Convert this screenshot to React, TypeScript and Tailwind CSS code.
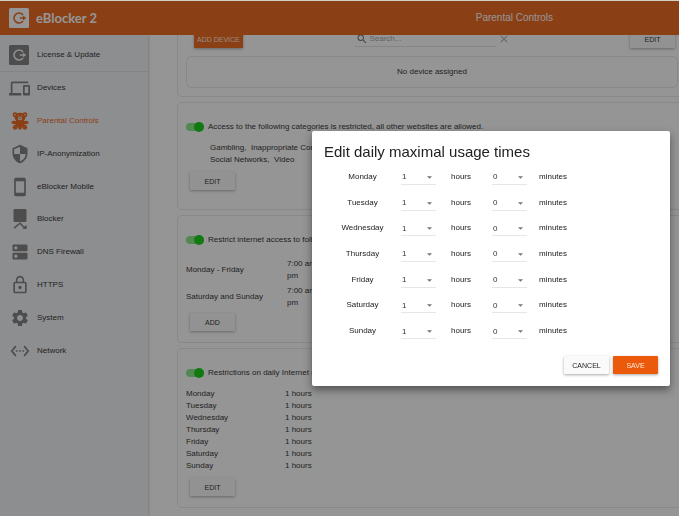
import React from 'react';
import {
  MdClose,
  MdDevices,
  MdDns,
  MdLockOutline,
  MdSearch,
  MdSecurity,
  MdSettings,
  MdSettingsEthernet,
  MdSmartphone,
} from 'react-icons/md';

const DAYS = ['Monday', 'Tuesday', 'Wednesday', 'Thursday', 'Friday', 'Saturday', 'Sunday'];

function Logo({ className, mark }: { className: string; mark: string }) {
  return (
    <svg viewBox="0 0 20 20" className={className} aria-hidden="true">
      <rect width="20" height="20" rx="1.5" fill="currentColor" />
      <path d="M14 7A5 5 0 1 0 14 13" fill="none" stroke={mark} strokeWidth="1.6" />
      <path d="M10.8 9.2H14V7.4L17.2 10L14 12.6V10.8H10.8Z" fill={mark} />
    </svg>
  );
}

function BearIcon() {
  return (
    <svg viewBox="0 0 24 24" className="size-5" fill="currentColor" aria-hidden="true">
      <circle cx="6" cy="4.4" r="2.8" />
      <circle cx="18" cy="4.4" r="2.8" />
      <ellipse cx="12" cy="7.6" rx="6.6" ry="5.4" />
      <path d="M7 11.5h10l1 7.5H6z" />
      <ellipse cx="5" cy="13.8" rx="3.4" ry="2.1" />
      <ellipse cx="19" cy="13.8" rx="3.4" ry="2.1" />
      <circle cx="6.2" cy="19.6" r="2.9" />
      <circle cx="17.8" cy="19.6" r="2.9" />
      <ellipse cx="12" cy="19.6" rx="2.3" ry="2.9" />
      <g fill="#f0f2f5">
        <circle cx="6" cy="4.4" r="0.9" />
        <circle cx="18" cy="4.4" r="0.9" />
        <circle cx="9.6" cy="5.6" r="0.6" />
        <circle cx="14.4" cy="5.6" r="0.6" />
        <circle cx="12" cy="8.8" r="2.3" />
      </g>
      <circle cx="12" cy="8.6" r="1" />
    </svg>
  );
}

function BlockerIcon() {
  return (
    <svg viewBox="0 0 20 20" className="size-5" fill="currentColor" aria-hidden="true">
      <rect x="3.5" y="0" width="13" height="13" rx="1.2" />
      <path d="M4 19.2L10 14.2L12.8 17L15 18.8" fill="none" stroke="currentColor" strokeWidth="1.5" />
      <path d="M16.6 15.8V20H12.4Z" />
    </svg>
  );
}

const NAV = [
  { label: 'Devices', icon: <MdDevices className="size-[21px]" /> },
  { label: 'Parental Controls', icon: <BearIcon />, active: true },
  { label: 'IP-Anonymization', icon: <MdSecurity className="size-5" /> },
  { label: 'eBlocker Mobile', icon: <MdSmartphone className="size-5" /> },
  { label: 'Blocker', icon: <BlockerIcon /> },
  { label: 'DNS Firewall', icon: <MdDns className="size-5" /> },
  { label: 'HTTPS', icon: <MdLockOutline className="size-5" /> },
  { label: 'System', icon: <MdSettings className="size-5" /> },
  { label: 'Network', icon: <MdSettingsEthernet className="size-5" /> },
];

function Button({ children, primary = false }: { children: React.ReactNode; primary?: boolean }) {
  return (
    <button
      type="button"
      className={
        'h-[18px] min-w-[45px] rounded-[1px] px-[3px] text-[7px] leading-none shadow-[0_1px_3px_rgba(0,0,0,0.35)] ' +
        (primary ? 'bg-[#eb5a0a] text-[#ffe9dc]' : 'bg-[#fafafa] text-[#212121]')
      }
    >
      {children}
    </button>
  );
}

function Toggle({ label }: { label: string }) {
  return (
    <label className="flex h-3 items-center gap-1 whitespace-nowrap">
      <input
        type="checkbox"
        role="switch"
        defaultChecked
        className="h-2 w-[18px] appearance-none rounded-full bg-[#80e680] before:-mt-px before:ml-2 before:block before:size-[10px] before:rounded-full before:bg-[#00cc00] before:content-['']"
      />
      {label}
    </label>
  );
}

function Card({ className = '', children }: { className?: string; children: React.ReactNode }) {
  return (
    <section className={'rounded-[5px] border border-[#e6e6e6] px-2 ' + className}>{children}</section>
  );
}

function NumberSelect({ label, max, value }: { label: string; max: number; value: number }) {
  return (
    <span className="relative block">
      <select
        aria-label={label}
        defaultValue={value}
        className="block h-4 w-full appearance-none border-b border-[#e6e6e6] bg-transparent pt-[2px] pl-px text-[8px] text-[#333]"
      >
        {Array.from({ length: max + 1 }, (_, n) => (
          <option key={n}>{n}</option>
        ))}
      </select>
      <svg viewBox="0 0 6 3" className="pointer-events-none absolute top-[7px] right-1 h-[3px] w-[5px]" aria-hidden="true">
        <path d="M0 0h6L3 3z" fill="#757575" />
      </svg>
    </span>
  );
}

function UsageDialog() {
  return (
    <div
      role="dialog"
      aria-labelledby="usage-title"
      className="w-[358px] rounded-[2px] bg-white p-3 shadow-[0_4px_9px_rgba(0,0,0,0.45)]"
    >
      <h2 id="usage-title" className="text-[15px] leading-[18px] text-[#212121]">
        Edit daily maximal usage times
      </h2>
      <div className="mt-[3px] grid h-[180px] auto-rows-fr">
        {DAYS.map((day) => (
          <div key={day} className="grid grid-cols-[77px_35px_21px_35px_auto] items-center">
            <span className="text-center">{day}</span>
            <NumberSelect label={day + ' hours'} max={23} value={1} />
            <span className="ml-[15px]">hours</span>
            <span className="ml-[35px] w-[35px]">
              <NumberSelect label={day + ' minutes'} max={59} value={0} />
            </span>
            <span className="ml-[47px]">minutes</span>
          </div>
        ))}
      </div>
      <div className="mt-3 flex justify-end gap-1">
        <Button>CANCEL</Button>
        <Button primary>SAVE</Button>
      </div>
    </div>
  );
}

export default function App() {
  return (
    <div className="flex h-screen flex-col overflow-hidden border-t border-[#d5cfc8] bg-white font-['Liberation_Sans',Arial,sans-serif] text-[8px] leading-3 text-[#212121]">
      <header className="relative z-10 flex h-[34px] shrink-0 items-center bg-[#eb5a0a] text-white">
        <div className="flex flex-1 items-center gap-[7px] pl-[9px]">
          <Logo className="size-5 text-white" mark="#eb5a0a" />
          <span className="font-[Lato,sans-serif] text-[13px] leading-4 font-bold">eBlocker 2</span>
        </div>
        <h1 className="pr-[126px] text-[10px]">Parental Controls</h1>
      </header>

      <div className="flex min-h-0 flex-1">
        <nav className="w-[148px] shrink-0 bg-[#f0f2f5] shadow-[1px_0_2px_rgba(0,0,0,0.2)]">
          <a href="#license" className="flex h-[37px] items-center gap-2 border-b border-[#dcdee1] pt-1 pl-[9px]">
            <Logo className="size-5 text-[#757575]" mark="#f0f2f5" />
            License &amp; Update
          </a>
          <div className="grid h-[295px] auto-rows-fr">
            {NAV.map((item) => (
              <a
                key={item.label}
                href="#"
                className={'flex items-center gap-[7px] pl-[9px] ' + (item.active ? 'text-[#eb5a0a]' : '')}
              >
                <span className={'flex w-[21px] justify-center ' + (item.active ? '' : 'text-[#757575]')}>
                  {item.icon}
                </span>
                {item.label}
              </a>
            ))}
          </div>
        </nav>

        <main className="min-w-0 flex-1 overflow-hidden pl-[29px]">
          <div className="-mt-5 -mr-2 flex flex-col gap-[5px]">
            <Card className="pt-[14px] pb-2">
              <div className="flex items-center justify-between pr-[3px] pl-2">
                <Button primary>ADD DEVICE</Button>
                <div className="flex w-[162px] items-center gap-[2px]">
                  <label className="flex h-4 w-[141px] items-center gap-px border-b border-[#e0e0e0] pl-px">
                    <MdSearch className="size-3 shrink-0 text-[#616161]" />
                    <input
                      type="text"
                      placeholder="Search..."
                      aria-label="Search"
                      className="w-full bg-transparent outline-none placeholder:text-[#9e9e9e]"
                    />
                  </label>
                  <button type="button" aria-label="Clear search" className="text-[#a5a5a5]">
                    <MdClose className="size-3" />
                  </button>
                </div>
                <Button>EDIT</Button>
              </div>
              <p className="mt-2 flex h-8 items-center justify-center rounded-[5px] border border-[#e6e6e6]">
                No device assigned
              </p>
            </Card>

            <Card className="pt-[18px] pb-[19px]">
              <Toggle label="Access to the following categories is restricted, all other websites are allowed." />
              <p className="mt-[9px] w-[130px] pl-6 whitespace-nowrap">
                Gambling,&nbsp; Inappropriate Content,
                <br />
                Social Networks,&nbsp; Video
              </p>
              <div className="mt-[6px] ml-1">
                <Button>EDIT</Button>
              </div>
            </Card>

            <Card className="pt-[18px] pb-[11px]">
              <Toggle label="Restrict internet access to following times" />
              <dl className="mt-3 grid grid-cols-[101px_60px] items-center gap-y-[3px]">
                <dt>Monday - Friday</dt>
                <dd>7:00 am - 8:00 pm</dd>
                <dt>Saturday and Sunday</dt>
                <dd>7:00 am - 8:00 pm</dd>
              </dl>
              <div className="mt-1 ml-1">
                <Button>ADD</Button>
              </div>
            </Card>

            <Card className="pt-[18px] pb-[11px]">
              <Toggle label="Restrictions on daily Internet usage" />
              <table className="mt-[9px]">
                <tbody>
                  {DAYS.map((day) => (
                    <tr key={day}>
                      <td className="w-[99px] p-0">{day}</td>
                      <td className="p-0">1 hours</td>
                    </tr>
                  ))}
                </tbody>
              </table>
              <div className="mt-[6px] ml-1">
                <Button>EDIT</Button>
              </div>
            </Card>
          </div>
        </main>
      </div>

      <div className="fixed inset-x-0 top-px bottom-0 z-20 flex items-center justify-end bg-[#212121]/48 pr-[9px]">
        <UsageDialog />
      </div>
    </div>
  );
}
